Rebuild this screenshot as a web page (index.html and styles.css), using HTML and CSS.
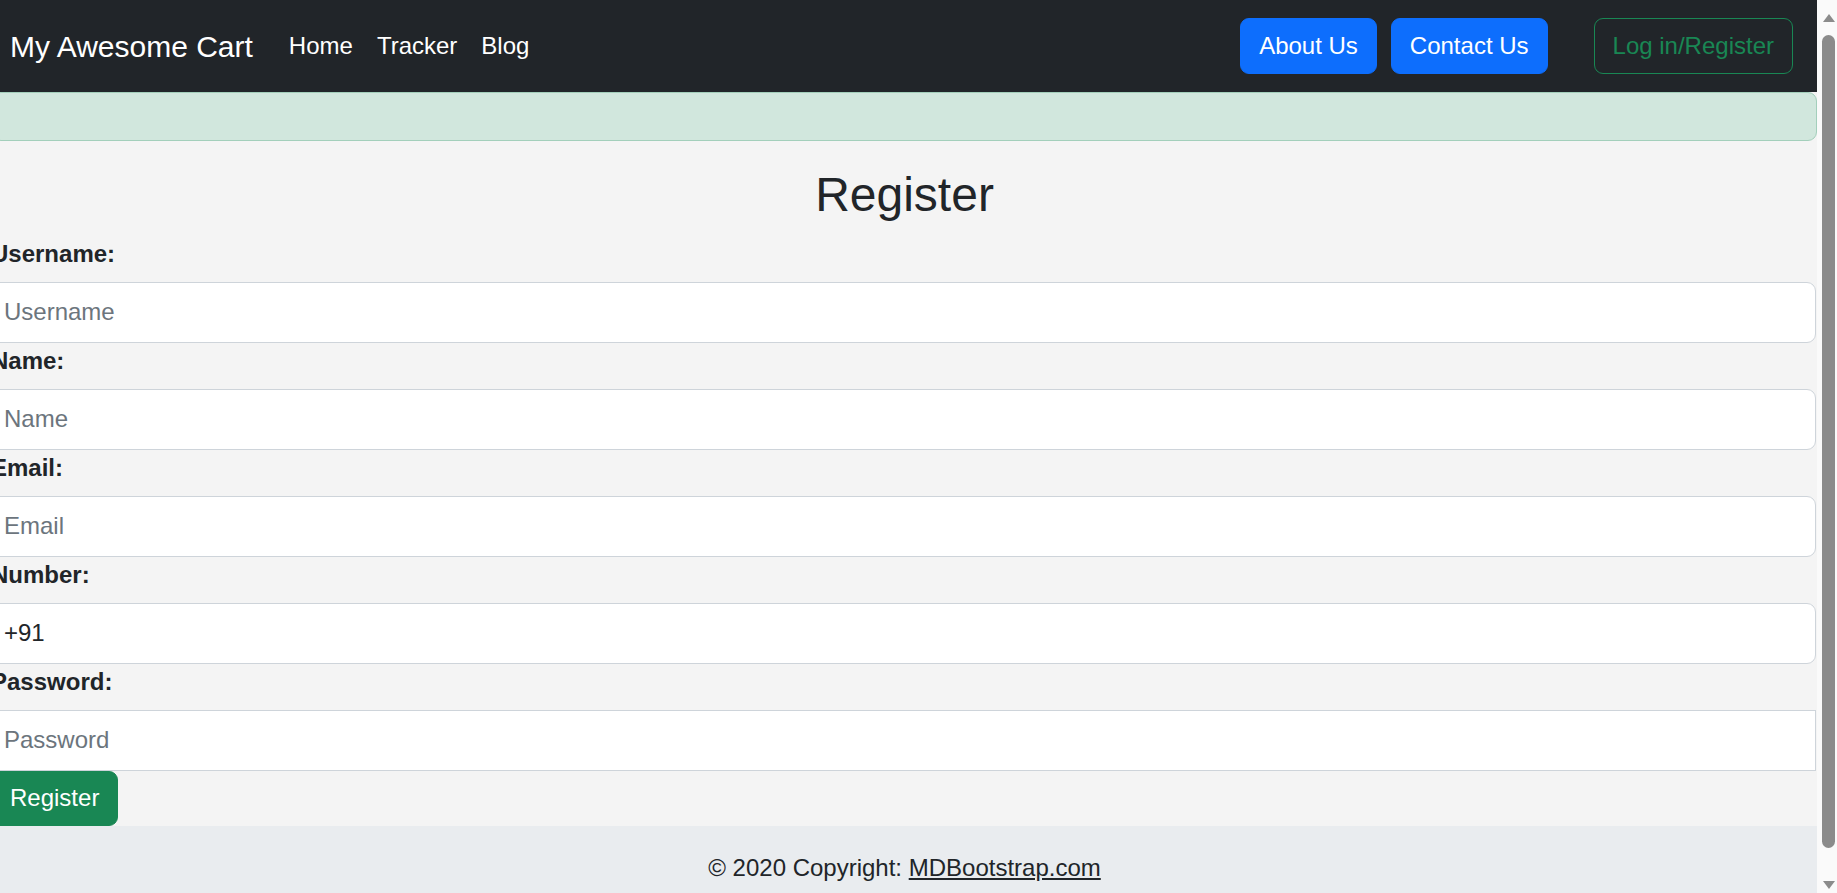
FILE: index.html
```html
<!DOCTYPE html>
<html lang="en">
<head>
<meta charset="utf-8">
<title>Register - My Awesome Cart</title>
<link rel="stylesheet" href="styles.css">
</head>
<body>
<div class="page">
  <nav class="navbar">
    <a class="brand" href="#">My Awesome Cart</a>
    <ul class="nav-links">
      <li><a href="#">Home</a></li>
      <li><a href="#">Tracker</a></li>
      <li><a href="#">Blog</a></li>
    </ul>
    <div class="nav-actions">
      <button class="btn btn-primary">About Us</button>
      <button class="btn btn-primary">Contact Us</button>
      <button class="btn btn-outline-success btn-login">Log in/Register</button>
    </div>
  </nav>
  <div class="alert"></div>
  <main class="content">
    <h2 class="title">Register</h2>
    <form class="form">
      <div class="field">
        <label class="form-label">Username:</label>
        <input class="form-control" type="text" placeholder="Username">
      </div>
      <div class="field">
        <label class="form-label">Name:</label>
        <input class="form-control" type="text" placeholder="Name">
      </div>
      <div class="field">
        <label class="form-label">Email:</label>
        <input class="form-control" type="text" placeholder="Email">
      </div>
      <div class="field">
        <label class="form-label">Number:</label>
        <input class="form-control" type="text" value="+91">
      </div>
      <div class="field">
        <label class="form-label">Password:</label>
        <input class="form-control square" type="password" placeholder="Password">
      </div>
      <button class="btn btn-success" type="button">Register</button>
    </form>
  </main>
  <footer class="footer">© 2020 Copyright: <a href="#">MDBootstrap.com</a></footer>
</div>
<div class="scrollbar">
  <div class="sb-up"></div>
  <div class="sb-thumb"></div>
  <div class="sb-down"></div>
</div>
</body>
</html>
```

FILE: styles.css
```css
html, body {
  margin: 0;
  padding: 0;
  overflow: hidden;
  height: 100%;
}
body {
  background: #f4f4f4;
  font-family: "Liberation Sans", Arial, sans-serif;
  color: #212529;
}
.page {
  margin-left: -8px;
  width: 1825px;
  background: #f4f4f4;
}
.navbar {
  height: 92px;
  background: #212529;
  display: flex;
  align-items: center;
  padding: 0 24px 0 18px;
  box-sizing: border-box;
}
.brand {
  font-size: 30px;
  color: #fff;
  text-decoration: none;
  margin-right: 24px;
  line-height: 45px;
}
.nav-links {
  list-style: none;
  display: flex;
  margin: 0;
  padding: 0;
}
.nav-links a {
  display: block;
  padding: 0 12px;
  font-size: 24px;
  line-height: 36px;
  color: #fff;
  text-decoration: none;
}
.nav-actions {
  margin-left: auto;
  display: flex;
  gap: 14px;
}
.btn {
  font-family: "Liberation Sans", Arial, sans-serif;
  font-size: 24px;
  height: 56px;
  padding: 0 18px;
  border: 1px solid transparent;
  border-radius: 9px;
  line-height: 36px;
  cursor: pointer;
}
.btn-primary {
  background: #0d6efd;
  border-color: #0d6efd;
  color: #fff;
}
.btn-outline-success {
  background: transparent;
  border-color: #198754;
  color: #198754;
}
.btn-login {
  margin-left: 32px;
}
.alert {
  height: 49px;
  box-sizing: border-box;
  background: #d1e7dd;
  border: 1px solid #a3cfbb;
  border-radius: 9px;
}
.content {
  padding-top: 25px;
}
.title {
  margin: 0 0 12px;
  font-size: 48px;
  font-weight: 500;
  line-height: 57.6px;
  text-align: center;
}
.field {
  display: flex;
  flex-direction: column;
}
.form-label {
  font-size: 24px;
  font-weight: 700;
  line-height: 36px;
  margin: 0 0 10px -1px;
}
.form-control {
  display: block;
  box-sizing: border-box;
  height: 61px;
  margin-left: -7px;
  width: calc(100% + 6px);
  padding: 0 18px;
  border: 1px solid #ced4da;
  border-radius: 9px;
  background: #fff;
  font-family: "Liberation Sans", Arial, sans-serif;
  font-size: 24px;
  color: #212529;
  outline: none;
}
.form-control::placeholder {
  color: #6c757d;
}
.form-control.square {
  border-radius: 0;
}
.btn-success {
  display: block;
  height: 55px;
  margin-left: -1px;
  background: #198754;
  border-color: #198754;
  color: #fff;
}
.footer {
  background: #e9ecef;
  padding: 24px;
  font-size: 24px;
  line-height: 36px;
  text-align: center;
}
.footer a {
  color: #212529;
}
.scrollbar {
  position: fixed;
  top: 0;
  right: 0;
  width: 20px;
  height: 100%;
  background: #fafafa;
}
.sb-thumb {
  position: absolute;
  left: 5px;
  width: 13px;
  top: 35px;
  bottom: 45px;
  border-radius: 7px;
  background: #8b8b8b;
}
.sb-up {
  position: absolute;
  left: 6px;
  top: 14px;
  width: 0;
  height: 0;
  border-left: 6px solid transparent;
  border-right: 6px solid transparent;
  border-bottom: 8px solid #8b8b8b;
}
.sb-down {
  position: absolute;
  left: 6px;
  bottom: 4px;
  width: 0;
  height: 0;
  border-left: 6px solid transparent;
  border-right: 6px solid transparent;
  border-top: 8px solid #8b8b8b;
}
```
